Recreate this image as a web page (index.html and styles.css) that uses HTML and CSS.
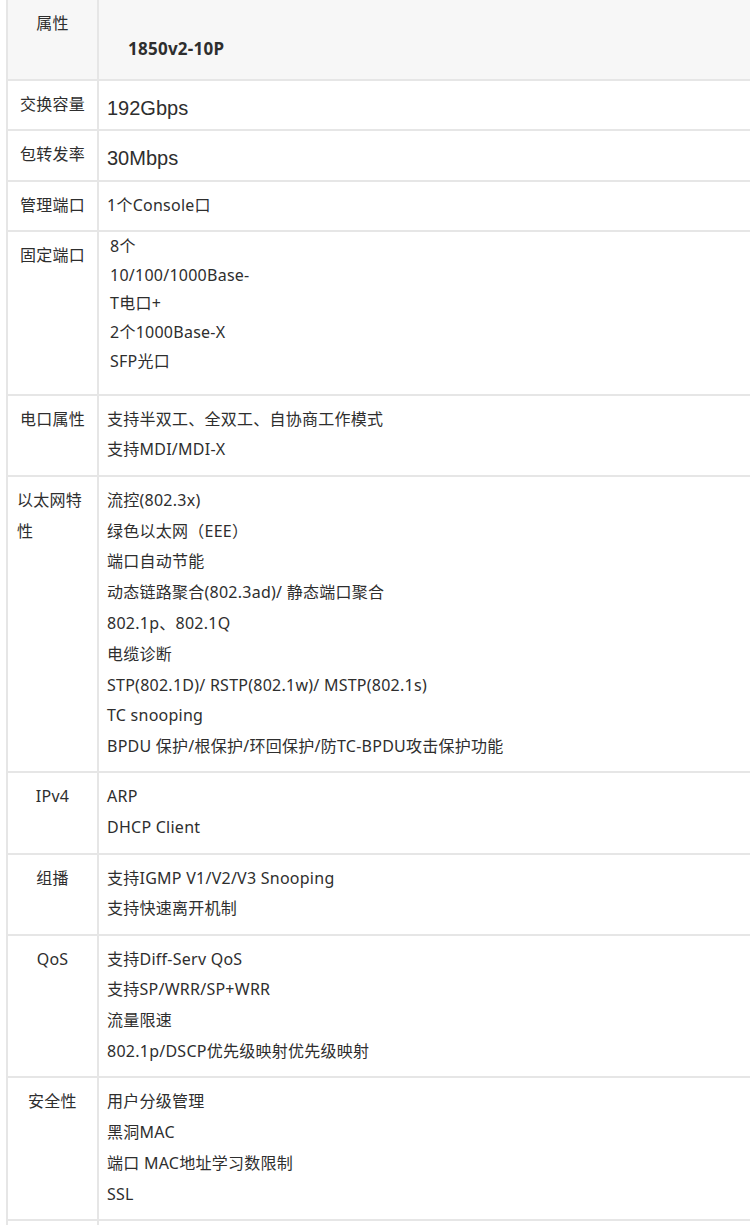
FILE: index.html
```html
<html lang="zh-CN">
<head>
  <meta charset="UTF-8">
  <title>1850v2-10P 规格</title>
  <link rel="stylesheet" href="styles.css">
</head>
<body>

  <table class="specs">
    <tr class="head">
      <td class="label">属性</td>
      <td class="model">1850v2-10P</td>
    </tr>
    <tr>
      <td class="label">交换容量</td>
      <td class="num"><span class="big">192Gbps</span></td>
    </tr>
    <tr>
      <td class="label">包转发率</td>
      <td class="num"><span class="big">30Mbps</span></td>
    </tr>
    <tr>
      <td class="label">管理端口</td>
      <td>1个Console口</td>
    </tr>
    <tr>
      <td class="label">固定端口</td>
      <td class="ports">
        8个<br>
        10/100/1000Base-<br>
        T电口+<br>
        2个1000Base-X<br>
        SFP光口
      </td>
    </tr>
    <tr>
      <td class="label">电口属性</td>
      <td>
        支持半双工、全双工、自协商工作模式<br>
        支持MDI/MDI-X
      </td>
    </tr>
    <tr>
      <td class="label left">以太网特性</td>
      <td>
        流控(802.3x)<br>
        绿色以太网（EEE）<br>
        端口自动节能<br>
        动态链路聚合(802.3ad)/ 静态端口聚合<br>
        802.1p、802.1Q<br>
        电缆诊断<br>
        STP(802.1D)/ RSTP(802.1w)/ MSTP(802.1s)<br>
        TC snooping<br>
        BPDU 保护/根保护/环回保护/防TC-BPDU攻击保护功能
      </td>
    </tr>
    <tr>
      <td class="label">IPv4</td>
      <td>
        ARP<br>
        DHCP Client
      </td>
    </tr>
    <tr>
      <td class="label">组播</td>
      <td>
        支持IGMP V1/V2/V3 Snooping<br>
        支持快速离开机制
      </td>
    </tr>
    <tr>
      <td class="label">QoS</td>
      <td>
        支持Diff-Serv QoS<br>
        支持SP/WRR/SP+WRR<br>
        流量限速<br>
        802.1p/DSCP优先级映射优先级映射
      </td>
    </tr>
    <tr>
      <td class="label">安全性</td>
      <td>
        用户分级管理<br>
        黑洞MAC<br>
        端口 MAC地址学习数限制<br>
        SSL
      </td>
    </tr>
    <tr>
      <td class="label">&nbsp;</td>
      <td>&nbsp;</td>
    </tr>
  </table>

</body>
</html>
```

FILE: styles.css
```css
* { box-sizing: border-box; }
body {
  margin: 0;
  font-family: "Noto Sans", "Noto Sans CJK SC", sans-serif;
  font-size: 16px;
  letter-spacing: 0.25px;
  color: #2e2e2e;
  background: #fff;
}

.specs {
  margin-left: 6px;
  width: 744px;
  table-layout: fixed;
  border-collapse: separate;
  border-spacing: 0;
  border-left: 2px solid #e6e6e6;
}

.specs td {
  vertical-align: top;
  padding: 8px 8px 9.5px;
  line-height: 30.8px;
  border-bottom: 2px solid #e6e6e6;
}

.specs td.label {
  width: 91px;
  padding-left: 9px;
  padding-right: 9px;
  text-align: center;
  border-right: 2px solid #e6e6e6;
}

.specs td.left {
  text-align: left;
}

.head td {
  background: #f7f7f7;
}

.specs td.model {
  padding: 33px 8px 15px 29px;
  line-height: 31px;
  font-weight: bold;
  font-size: 17px;
}

.specs td.num {
  padding-top: 12px;
  padding-bottom: 5.5px;
}

.big {
  font-family: "Liberation Sans", Arial, sans-serif;
  font-size: 20px;
  letter-spacing: 0;
}

.specs td.ports {
  padding: 0 8px 18px 11px;
  line-height: 28.75px;
}
```
